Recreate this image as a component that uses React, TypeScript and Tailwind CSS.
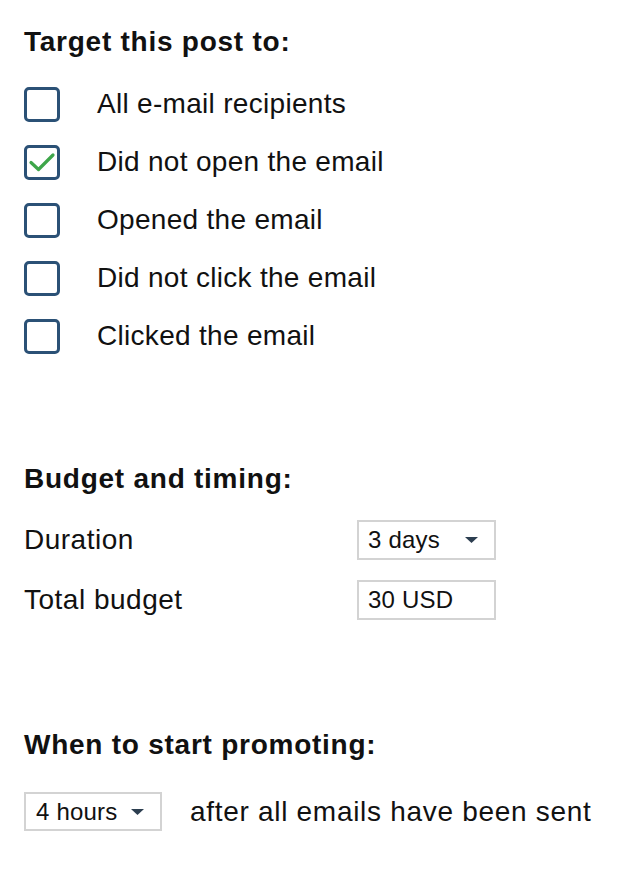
import React from "react";

const font = "font-['Helvetica_Neue','Liberation_Sans',Arial,sans-serif]";

function Checkbox({ checked }: { checked?: boolean }) {
  return (
    <div className="w-[36px] h-[35px] shrink-0 border-[3px] border-[#2b5176] rounded-[5px] flex items-center justify-center">
      {checked && (
        <svg width="28" height="22" viewBox="0 0 28 22" fill="none">
          <path d="M3 11.5 L10.5 18.5 L25 4" stroke="#3ea64a" strokeWidth="3.2" strokeLinecap="round" strokeLinejoin="round" />
        </svg>
      )}
    </div>
  );
}

function Caret() {
  return (
    <svg width="13" height="6" viewBox="0 0 13 6" className="shrink-0">
      <path d="M0 0 H13 L6.5 6 Z" fill="#2c3e50" />
    </svg>
  );
}

function SelectBox({ label, w, caretGap }: { label: string; w: string; caretGap?: boolean }) {
  return (
    <div className={`${w} h-[40px] border-2 border-[#d3d3d3] flex items-center pl-[9px] pr-[16px] text-[24px] leading-none tracking-[0.2px]`}>
      <span className="flex-1">{label}</span>
      {caretGap !== false && <Caret />}
    </div>
  );
}

const items = [
  { label: "All e-mail recipients", checked: false },
  { label: "Did not open the email", checked: true },
  { label: "Opened the email", checked: false },
  { label: "Did not click the email", checked: false },
  { label: "Clicked the email", checked: false },
];

export default function App() {
  return (
    <div className={`w-[642px] h-[896px] bg-white pl-[24px] pt-[24px] text-[#111111] ${font}`}>
      <h2 className="text-[28px] leading-[36px] font-bold tracking-[0.75px]">Target this post to:</h2>
      <div className="mt-[26px] flex flex-col gap-[22px]">
        {items.map((it) => (
          <div key={it.label} className="flex items-center h-[36px]">
            <Checkbox checked={it.checked} />
            <span className="ml-[37px] text-[28px] leading-[36px] tracking-[0.3px]">{it.label}</span>
          </div>
        ))}
      </div>

      <h2 className="mt-[107px] text-[28px] leading-[36px] font-bold tracking-[0.75px]">Budget and timing:</h2>
      <div className="mt-[23px] flex flex-col gap-[20px]">
        <div className="flex items-center h-[40px]">
          <span className="w-[333px] text-[28px] leading-[36px] tracking-[0.5px]">Duration</span>
          <SelectBox label="3 days" w="w-[139px]" />
        </div>
        <div className="flex items-center h-[40px]">
          <span className="w-[333px] text-[28px] leading-[36px] tracking-[0.5px]">Total budget</span>
          <SelectBox label="30 USD" w="w-[139px]" caretGap={false} />
        </div>
      </div>

      <h2 className="mt-[107px] text-[28px] leading-[36px] font-bold tracking-[0.75px]">When to start promoting:</h2>
      <div className="mt-[29px] flex items-center">
        <div className="w-[138px] h-[39px] border-2 border-[#d3d3d3] flex items-center pl-[10px] pr-[16px] text-[24px] leading-none tracking-[0.2px]">
          <span className="flex-1">4 hours</span>
          <Caret />
        </div>
        <span className="ml-[28px] text-[28px] leading-[36px] tracking-[0.7px]">after all emails have been sent</span>
      </div>
    </div>
  );
}
